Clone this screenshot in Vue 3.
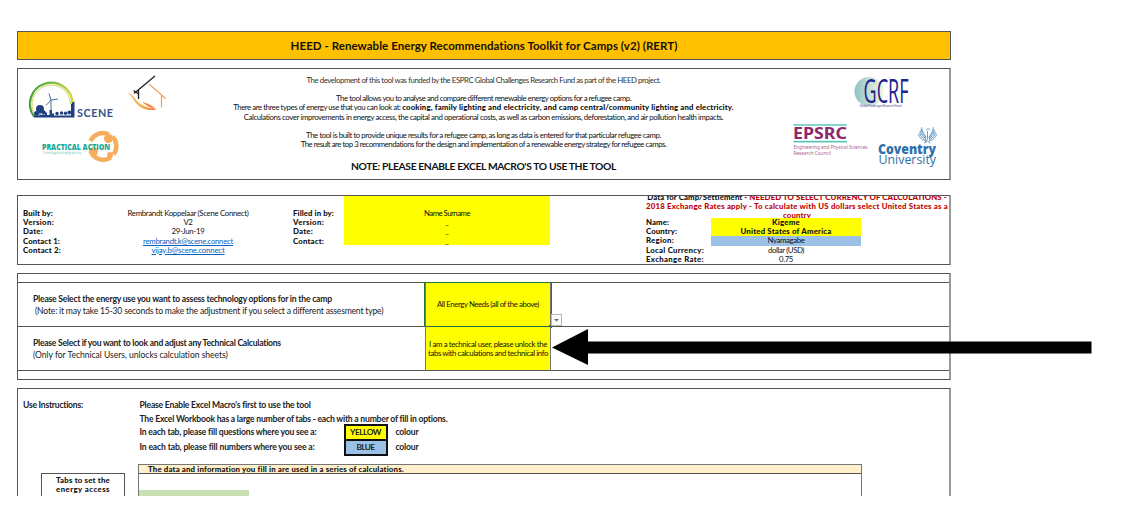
<script setup>
// Spreads a cell's text over the given pixel width through letter spacing.
const vFit = {
  mounted(el, { value }) {
    const natural = el.getBoundingClientRect().width
    el.style.letterSpacing = (value - natural) / el.textContent.length + 'px'
  }
}

const built = [
  ['Built by:', 30, 'Rembrandt Koppelaar (Scene Connect)', 121, false],
  ['Version:', 31, 'V2', 9, false],
  ['Date:', 20, '29-Jun-19', 33, false],
  ['Contact 1:', 37, 'rembrandt.k@scene.connect', 90, true],
  ['Contact 2:', 38, 'vijay.b@scene.connect', 73, true]
]
const filled = [['Filled in by:', 41], ['Version:', 31], ['Date:', 20], ['Contact:', 31]]
const camp = [
  ['Name:', 23, 'Kigeme', 28, 'yellow strong'],
  ['Country:', 31, 'United States of America', 91, 'yellow strong'],
  ['Region:', 28, 'Nyamagabe', 37, 'blue'],
  ['Local Currency:', 58, 'dollar (USD)', 36, ''],
  ['Exchange Rate:', 58, '0.75', 14, '']
]
const ray = [0, 1, 2, 3, 4]
</script>

<template>
  <main class="sheet">
    <header class="box title"><span v-fit="387">HEED - Renewable Energy Recommendations Toolkit for Camps (v2) (RERT)</span></header>

    <section class="box intro">
      <svg class="logos" width="200" height="110" viewBox="18 69 200 110">
        <defs>
          <linearGradient id="arc"><stop offset="0" stop-color="#4b9f3c" /><stop offset=".5" stop-color="#6cb544" /><stop offset="1" stop-color="#d3d62b" /></linearGradient>
          <linearGradient id="flame"><stop offset="0" stop-color="#f9a24a" /><stop offset=".5" stop-color="#fbb44c" /><stop offset="1" stop-color="#f1592a" /></linearGradient>
        </defs>
        <path d="M34 116.500A21.300 21.300 0 1 1 72.500 104" fill="none" stroke="url(#arc)" stroke-width="2.2" />
        <path d="M35.500 115.500A19.300 19.300 0 1 1 70.500 104" fill="none" stroke="#c9d64c" stroke-width="1" />
        <g fill="#1f3f7e">
          <circle cx="40" cy="109" r="4" /><circle cx="36.500" cy="113.500" r="2.500" /><circle cx="43.500" cy="112.500" r="2.200" />
          <path d="M34 117.500V115.500H39.500V111H40.500V115H45V112.500H47V115H49.500V110H52V113.500H54V115.500H71V104H72V102.500L74.500 101.500V117.500Z" />
          <circle cx="57" cy="113.500" r="1.700" /><circle cx="61.500" cy="113" r="1.700" /><circle cx="65.500" cy="113.300" r="1.700" /><circle cx="69.300" cy="112.500" r="1.900" />
        </g>
        <path d="M51 116V100M51 100L49 93.500M51 100L58 99M51 100L46 105.500" fill="none" stroke="#315b91" stroke-width=".9" />
        <text x="77" y="117.300" class="scene" textLength="36">SCENE</text>

        <path d="M134 93.500L155 76M138.500 89.500V99M133.500 90.500L138.500 94" fill="none" stroke="#222" stroke-width="1.300" />
        <path d="M149 84L165.500 98.500M161.500 95V107.500" fill="none" stroke="#f5a35c" stroke-width="1.300" />
        <path d="M127 92Q133 95 136 100Q141 107 156 109.500Q143 112 136 103Q132 96 127 92Z" fill="url(#flame)" />
        <path d="M142 102Q152 104 156 109.500Q149 108 142 102Z" fill="#f68b40" />

        <g fill="none" stroke="#f7ae5c" stroke-width="4.500">
          <path d="M90.500 141A13.800 13.800 0 0 1 109 134.500" />
          <path d="M112.500 136.500A13.800 13.800 0 0 1 113.500 154.500" />
          <path d="M111 157.500A13.800 13.800 0 0 1 90.500 151" />
        </g>
        <circle cx="108.500" cy="138.500" r="4.500" fill="#f7ae5c" /><circle cx="93.500" cy="151.500" r="4.500" fill="#f7ae5c" /><circle cx="110" cy="155" r="3" fill="#f7ae5c" />
        <text x="42" y="150.300" class="practical" textLength="68" lengthAdjust="spacingAndGlyphs">PRACTICAL ACTION</text>
        <text x="42.500" y="154" class="motto" textLength="38.500">Technology challenging poverty</text>
      </svg>

      <div class="copy">
        <p><span v-fit="354" class="calibri">The development of this tool was funded by the ESPRC Global Challenges Research Fund as part of the HEED project.</span></p>
        <p></p>
        <p><span v-fit="295">The tool allows you to analyse and compare different renewable energy options for a refugee camp.</span></p>
        <p><span v-fit="169">There are three types of energy use that you can look at:&nbsp;</span><b v-fit="332">cooking, family lighting and electricity, and camp central/community lighting and electricity.</b></p>
        <p><span v-fit="480">Calculations cover improvements in energy access, the capital and operational costs, as well as carbon emissions, deforestation, and air pollution health impacts.</span></p>
        <p></p>
        <p><span v-fit="355">The tool is built to provide unique results for a refugee camp, as long as data is entered for that particular refugee camp.</span></p>
        <p><span v-fit="366">The result are top 3 recommendations for the design and implementation of a renewable energy strategy for refugee camps.</span></p>
        <p class="note"><span v-fit="265">NOTE: PLEASE ENABLE EXCEL MACRO'S TO USE THE TOOL</span></p>
      </div>

      <svg class="logos" width="170" height="110" viewBox="779 69 170 110">
        <defs>
          <linearGradient id="globe"><stop offset="0" stop-color="#7db9bd" /><stop offset=".5" stop-color="#bdd9cd" /><stop offset="1" stop-color="#f4f4dc" /></linearGradient>
          <pattern id="dots" width="2" height="2" patternUnits="userSpaceOnUse"><circle cx="1" cy="1" r=".45" fill="#fff" /></pattern>
        </defs>
        <circle cx="869" cy="91.500" r="14.500" fill="url(#globe)" /><circle cx="869" cy="91.500" r="14.500" fill="url(#dots)" />
        <text x="863.500" y="103" class="gcrf" textLength="45" lengthAdjust="spacingAndGlyphs">GCRF</text>
        <text x="859.500" y="107.300" class="gcrf-sub" textLength="42">Global Challenges Research Fund</text>
        <path d="M793.500 125H847M793.500 141.700H847" stroke="#5fc6bd" stroke-width="1.700" />
        <text x="793" y="139" class="epsrc" textLength="54" lengthAdjust="spacingAndGlyphs">EPSRC</text>
        <text x="793.500" y="148.700" class="epsrc-sub" textLength="74">Engineering and Physical Sciences</text>
        <text x="793.500" y="154.500" class="epsrc-sub" textLength="37.500">Research Council</text>
        <g fill="none" stroke="#5289b8" stroke-width=".8">
          <path v-for="i in ray" :key="i" :d="`M926 ${141 - i}Q${919 + i * .7} ${139 - i * 2} ${918.5 + i * .8} ${134 - i * 1.7}M929 ${141 - i}Q${936 - i * .7} ${139 - i * 2} ${936.5 - i * .8} ${134 - i * 1.7}`" />
          <path d="M927.500 131V139L924.500 143L927.500 141L930.500 143M926 130Q928 127 930 130" />
        </g>
        <text x="878" y="154" class="cov bold" textLength="58" lengthAdjust="spacingAndGlyphs">Coventry</text>
        <text x="878.500" y="163.500" class="cov" textLength="57.500" lengthAdjust="spacingAndGlyphs">University</text>
      </svg>
    </section>

    <section class="box details">
      <dl class="built">
        <template v-for="r in built" :key="r[0]"><dt><span v-fit="r[1]">{{ r[0] }}</span></dt><dd><span v-fit="r[3]" :class="{ link: r[4] }">{{ r[2] }}</span></dd></template>
      </dl>
      <div class="labels"><div v-for="r in filled" :key="r[0]"><span v-fit="r[1]">{{ r[0] }}</span></div></div>
      <div class="person"><div><span v-fit="46">Name Surname</span></div><div>_</div><div>_</div><div>_</div></div>
      <div class="camp">
        <div class="warning">
          <div><span v-fit="299"><i>Data for Camp/Settlement - </i>NEEDED TO SELECT CURRENCY OF CALCULATIONS -</span></div>
          <div><span v-fit="302">2018 Exchange Rates apply - To calculate with US dollars select United States as a</span></div>
          <div><span v-fit="28">country</span></div>
        </div>
        <dl>
          <template v-for="r in camp" :key="r[0]"><dt><span v-fit="r[1]">{{ r[0] }}</span></dt><dd :class="r[4]"><span v-fit="r[3]">{{ r[2] }}</span></dd></template>
        </dl>
      </div>
    </section>

    <section class="box choices">
      <div class="strip"></div>
      <div class="choice">
        <div class="question"><b><span v-fit="299">Please Select the energy use you want to assess technology options for in the camp</span></b><div class="indent"><span v-fit="348">(Note: it may take 15-30 seconds to make the adjustment if you select a different assesment type)</span></div></div>
        <div class="answer selected"><span v-fit="102">All Energy Needs (all of the above)</span><i class="handle"></i>
          <svg class="drop" width="11" height="12" viewBox="0 0 11 12"><rect x=".5" y=".5" width="10" height="11" fill="#fcfcfc" stroke="#b7b7b7" /><path d="M3 5H8L5.500 7.500Z" fill="#666" /></svg>
        </div>
      </div>
      <div class="choice">
        <div class="question"><b><span v-fit="248">Please Select if you want to look and adjust any Technical Calculations</span></b><div><span v-fit="195">(Only for Technical Users, unlocks calculation sheets)</span></div></div>
        <div class="answer"><span v-fit="118">I am a technical user, please unlock the</span><span v-fit="120">tabs with calculations and technical info</span>
          <svg class="arrow" width="540" height="38" viewBox="0 0 540 38"><path d="M0 18.500L36 0V12.500H539.500V24.500H36V36Z" /></svg>
        </div>
      </div>
    </section>

    <section class="box guide">
      <div class="guide-grid">
        <div><span v-fit="60">Use Instructions:</span></div>
        <div class="steps">
          <div><span v-fit="171">Please Enable Excel Macro's first to use the tool</span></div>
          <div><span v-fit="308">The Excel Workbook has a large number of tabs - each with a number of fill in options.</span></div>
          <div class="step"><p><span v-fit="177">In each tab, please fill questions where you see a:</span></p><em class="yellow"><span v-fit="31">YELLOW</span></em><span v-fit="23">colour</span></div>
          <div class="step"><p><span v-fit="175">In each tab, please fill numbers where you see a:</span></p><em class="blue"><span v-fit="18">BLUE</span></em><span v-fit="23">colour</span></div>
        </div>
      </div>
      <div class="tables">
        <div class="tabs"><div><span v-fit="54">Tabs to set the</span></div><div><span v-fit="54">energy access</span></div></div>
        <div class="data"><div class="cream"><span v-fit="256">The data and information you fill in are used in a series of calculations.</span></div><div class="green"></div></div>
      </div>
    </section>
  </main>
</template>

<style>
body { background: #fff; overflow: hidden; }
</style>

<style scoped>
* { box-sizing: border-box; }
p, dl, dd, dt { margin: 0; }
i, em { font-style: normal; }
span, b { white-space: pre; }
span { display: inline-block; }
.sheet { width: 934px; height: 496px; margin-left: 17px; padding-top: 31px; overflow: visible; font: 7.8px/9px "Lato", "Liberation Sans", sans-serif; color: #111; }
.box { border: 1px solid #555; border-right: 2px solid #999; }
.title { height: 29px; background: #ffc000; border-right: 1px solid #555; display: flex; justify-content: center; align-items: center; font-size: 11.5px; line-height: 14px; font-weight: 700; color: #15100a; padding-top: 1px; }
.intro { height: 112px; margin-top: 8px; display: grid; grid-template-columns: 200px 531px 170px; justify-content: space-between; }
.logos { display: block; }
.copy { margin: 0 15px 0 -15px; padding-top: 7px; text-align: center; display: flex; flex-direction: column; align-items: center; }
.copy p { height: 9.15px; display: flex; }
.copy b { font-size: 7.8px; font-weight: 900; display: inline-block; }
.calibri { color: #333; }
.copy .note { height: 20px; margin-top: 8px; font-size: 10.3px; line-height: 19px; font-weight: 700; }
.scene { font: 700 10.800px Lato, sans-serif; fill: #30548b; }
.practical { font: 800 9px "Open Sans", sans-serif; fill: #17a995; }
.motto { font: 2.700px "Open Sans", sans-serif; fill: #56bfad; }
.gcrf { font: 33px "Open Sans", sans-serif; fill: #20248b; }
.gcrf-sub { font: 3.300px "Noto Sans", sans-serif; fill: #5b5ca0; }
.epsrc { font: 700 16px "Noto Sans", sans-serif; fill: #8c286b; }
.epsrc-sub { font: 4.700px "Noto Sans", sans-serif; fill: #b05a91; }
.cov { font: 13.500px "Open Sans", sans-serif; fill: #2f6fac; }
.cov.bold { font-weight: 800; }

.details { height: 70px; margin-top: 15px; display: grid; grid-template-columns: 275px 51px 206px 96px 302px; }
.built { padding: 13px 0 0 5px; display: grid; grid-template-columns: 60px 210px; grid-auto-rows: 9.2px; }
dt, .labels { font-weight: 900; }
dd { text-align: center; }
.link { color: #0563c1; text-decoration: underline; }
.labels { padding: 13px 0 0 0; }
.labels div, .person div { height: 9.2px; }
.person { height: 49px; padding-top: 13px; background: #ff0; text-align: center; }
.camp { grid-column: 5; }
.warning { height: 22px; overflow: hidden; color: #c00000; font-weight: 900; text-align: center; display: flex; flex-direction: column; align-items: center; }
.warning div { height: 9.2px; margin-top: 0; flex: none; }
.warning div:first-child { margin-top: -3px; }
.warning i { color: #111; }
.camp dl { display: grid; grid-template-columns: 65px 150px; grid-auto-rows: 9.2px; }
.yellow { background: #ff0; }
.blue { background: #9bc2e6; }
.strong { font-weight: 900; }

.choices { height: 107px; margin-top: 8px; }
.strip { height: 8px; }
.choice { height: 44px; display: grid; grid-template-columns: 407px 126px; border-top: 1px solid #555; }
.choice:last-child { height: 45px; border-bottom: 1px solid #555; }
.question { padding: 10px 0 0 15px; font-size: 8.6px; line-height: 12px; color: #222; }
.question b, .question > div { display: block; height: 12px; }
.indent { padding-left: 2px; }
.answer { position: relative; background: #ff0; border: 1px solid #777; border-width: 0 1px; display: flex; flex-direction: column; align-items: center; justify-content: center; }
.selected { outline: 1.5px solid #217346; }
.handle { position: absolute; right: -2px; bottom: -2px; width: 3px; height: 3px; background: #217346; }
.drop { position: absolute; left: 125px; top: 31px; }
.arrow { position: absolute; left: 125.5px; top: 1.5px; }

.guide { height: 108px; margin-top: 8px; border-bottom: 0; font-weight: 700; }
.guide-grid { height: 75px; padding: 9px 0 0 5px; display: grid; grid-template-columns: 116.5px 1fr; font-size: 8.6px; line-height: 14px; color: #222; }
.steps > div { height: 13.5px; }
.steps .step { height: 15.3px; display: grid; grid-template-columns: 204px 44px 40px; column-gap: 0; line-height: 15px; }
.step em { border: 2px solid #111; text-align: center; line-height: 13px; height: 17px; position: relative; top: -1px; font-size: 8.3px; }
.step > span { margin-left: 8px; justify-self: start; }
.tables { height: 32px; display: grid; grid-template-columns: 84px 724px; column-gap: 13px; padding-left: 23px; }
.tabs { margin-top: 9px; border: 1px solid #555; border-bottom: 0; text-align: center; padding-top: 2px; font-weight: 900; }
.tabs div { height: 9.3px; }
.data { border: 1px solid #777; border-bottom: 0; }
.cream { height: 9px; background: #fff0cb; border-bottom: 1px solid #555; padding-left: 9px; font-weight: 900; line-height: 8.5px; }
.green { width: 110px; height: 6px; margin-top: 16px; background: #c6e0b4; }
</style>
